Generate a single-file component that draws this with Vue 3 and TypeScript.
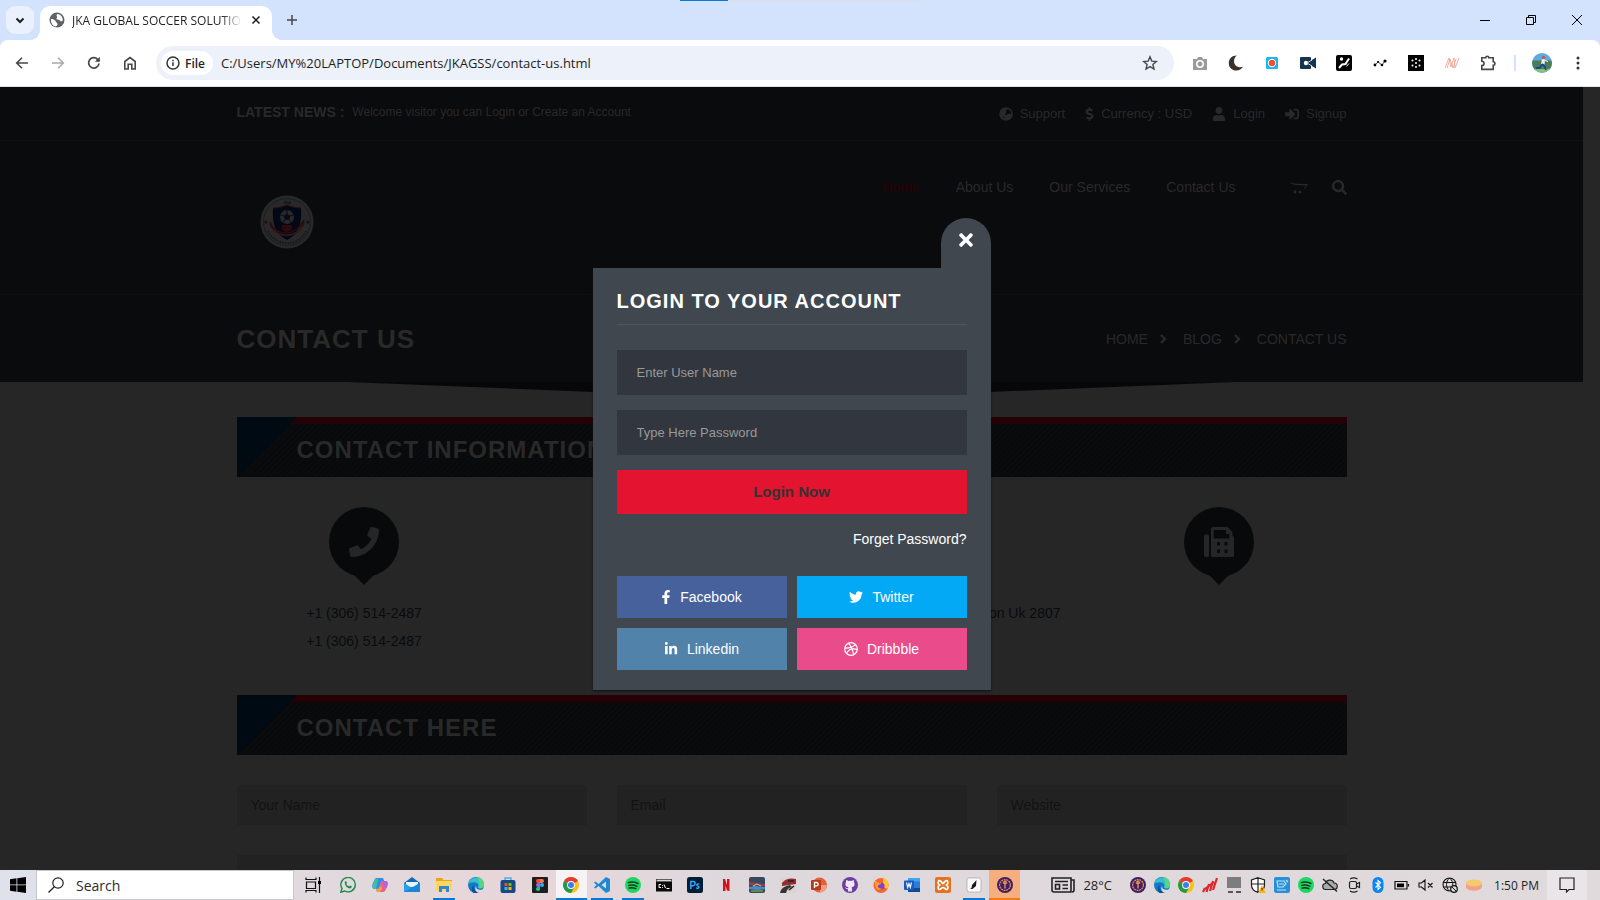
<script setup lang="ts">
import { ref } from 'vue'

interface Icon {
  box: string
  body: string
}

interface Item {
  icon: string
  label: string
  state?: string
}

const chromeRing =
  '<circle cx="8" cy="8" r="8" fill="#fbc116"/><path d="M8 8 1.1 4A8 8 0 0 1 14.9 4z" fill="#e33b2e"/><path d="M8 8 1.1 4A8 8 0 0 0 8 16l3.4-6z" fill="#229a4b"/><circle cx="8" cy="8" r="3.9" fill="#fff"/><circle cx="8" cy="8" r="3" fill="#3b7ded"/>'
const edgeSwirl =
  '<circle cx="8" cy="8" r="8" fill="#1678c8"/><path d="M.2 7A8 8 0 0 1 16 7.500c0 3-2.500 4.200-5 3.800-1.600-.2-1-1.200-.6-2C11 7 9 5.400 6.500 5.200 3.500 5 1.200 6 .2 7z" fill="#35c1c9"/><path d="M9 0.100C13 .3 16 3.500 16 7.500c0 3-2.500 4.200-5 3.800 1-4 .5-8-2-11.200z" fill="#5cd67a"/><path d="M6 8c-1.500 3 .5 7 6.500 6.600A8 8 0 0 1 5 15.400C3 13 3.500 9.500 6 8z" fill="#0b4f9e"/><path d="M8.200 9.200c-.4 2.300 1.500 4.200 6.200 3.400l1.600 1.200V16H11C7 15 6.500 11 8.200 9.200z" fill="#ded8dc"/>'
const spotifyDisc =
  '<circle cx="8" cy="8" r="8" fill="#1ed760"/><path d="M3.400 5.600c3.200-1 6.700-.7 9.500.9M3.800 8.400c2.700-.8 5.600-.5 8 .9M4.200 11c2.300-.6 4.600-.4 6.600.7" fill="none" stroke="#15351f" stroke-width="1.500" stroke-linecap="round"/>'
const purpleCoin =
  '<circle cx="8" cy="8" r="8" fill="#3e1f66"/><circle cx="8" cy="8" r="5.400" fill="none" stroke="#e98e4f" stroke-width="1.200" stroke-dasharray="2 .6"/><path d="M5.800 6h4.400M8 6v5.500M6.500 4.800 8 4l1.500.8" stroke="#f0a050" stroke-width="1.300" fill="none"/>'

const icons: Record<string, Icon> = {
  chevronDown: { box: '0 0 16 16', body: '<path d="M4.500 6.500 8 10l3.500-3.500" fill="none" stroke="#1f1f1f" stroke-width="2"/>' },
  globe: { box: '0 0 16 16', body: '<circle cx="8" cy="8" r="7.500" fill="#5f6368"/><path d="M2 7c2 0 3.500.5 4.500 2S8 11 8.500 12 7 14.500 6.500 14.500C4 14 2 11.500 2 8zM8.500 2c-1 1-1.500 1.500-.5 2.500s-1 1.500-.5 2.500 3 .5 3.500 1.500 1.500 1 2.500.5C14.500 5.500 12 2.500 8.500 2z" fill="#fff"/>' },
  cross: { box: '0 0 16 16', body: '<path d="m4 4 8 8m0-8-8 8" stroke="#1f1f1f" stroke-width="1.800"/>' },
  plus: { box: '0 0 16 16', body: '<path d="M8 3v10M3 8h10" stroke="#474747" stroke-width="1.500"/>' },
  minimize: { box: '0 0 12 12', body: '<path d="M1 6.500h10" stroke="#000"/>' },
  restore: { box: '0 0 12 12', body: '<path d="M1.500 3.500h7v7h-7zM3.500 3.500v-2h7v7h-2" fill="none" stroke="#000"/>' },
  close: { box: '0 0 12 12', body: '<path d="m1 1 10 10m0-10L1 11" stroke="#000"/>' },
  back: { box: '0 0 16 16', body: '<path d="M14 8H3m5-5.300L2.700 8 8 13.300" fill="none" stroke="#474747" stroke-width="1.600"/>' },
  forward: { box: '0 0 16 16', body: '<path d="M2 8h11M8 2.700 13.300 8 8 13.300" fill="none" stroke="#aaa" stroke-width="1.600"/>' },
  reload: { box: '0 0 16 16', body: '<path d="M13 8.500A5.200 5.200 0 1 1 11.600 4.300L13.200 6" fill="none" stroke="#474747" stroke-width="1.700"/><path d="M13.800 1.800v5h-5z" fill="#474747"/>' },
  home: { box: '0 0 16 16', body: '<path d="M2.800 14V6.500L8 2.500l5.200 4V14H9.800V9.300H6.200V14z" fill="none" stroke="#474747" stroke-width="1.600"/>' },
  info: { box: '0 0 16 16', body: '<circle cx="8" cy="8" r="6" fill="none" stroke="#333" stroke-width="1.500"/><path d="M8 7.300V11M8 4.700v1.500" stroke="#333" stroke-width="1.500"/>' },
  star: { box: '0 0 16 16', body: '<path d="m8 1.800 1.800 4.300 4.600.4-3.500 3 1.100 4.600L8 11.600l-4 2.500 1.100-4.600-3.500-3 4.600-.4z" fill="none" stroke="#474747" stroke-width="1.400"/>' },
  camera: { box: '0 0 16 16', body: '<path d="M1 4h4l1-2h4l1 2h4v11H1z" fill="#9b9b9b"/><circle cx="8" cy="9" r="3.200" fill="#9b9b9b" stroke="#fff" stroke-width="1.500"/>' },
  moon: { box: '0 0 16 16', body: '<path d="M9 .5C3.500.5.800 4 .800 8.200c0 4.300 3.400 7.300 7.400 7.300 3 0 5.500-1.300 6.800-3.700-5 1.700-9-1.300-9-5.800C6 3.800 7 1.800 9 .5z" fill="#383228"/>' },
  record: { box: '0 0 16 16', body: '<rect x="2" y="2" width="12" height="12" rx="1.500" fill="#12b8f5"/><circle cx="8" cy="8" r="4.200" fill="#fff"/><circle cx="8" cy="8" r="3.200" fill="#f4502a"/>' },
  video: { box: '0 0 16 16', body: '<path d="M1 2h9a1 1 0 0 1 1 1v2.500l5-3v11l-5-3V13a1 1 0 0 1-1 1H1a1 1 0 0 1-1-1V3a1 1 0 0 1 1-1z" fill="#16344e"/><circle cx="6" cy="8" r="2.200" fill="#fff"/><path d="m7 8 5-3M7 8l5 3" stroke="#cdd7df"/>' },
  slash: { box: '0 0 16 16', body: '<rect width="16" height="16" rx="2" fill="#000"/><path d="M3 13 6 9.500l3.500-.5L13 3.500" stroke="#fff" stroke-width="2" fill="none"/><circle cx="5.500" cy="4" r="1.700" fill="#fff"/><path d="m10.500 11.500 2.500-3" stroke="#fff"/>' },
  graph: { box: '0 0 16 16', body: '<path d="m3 10 3-3 4 3 3-4" stroke="#000" stroke-width=".7" fill="none"/><circle cx="3" cy="10" r="1.400"/><circle cx="6" cy="7" r="1.100"/><circle cx="10" cy="10" r="1.300"/><circle cx="13" cy="6" r="1.600"/>' },
  dots: { box: '0 0 16 16', body: '<path d="M0 0h16v16H0z"/><g fill="#fff"><circle cx="8" cy="4" r="1"/><circle cx="4.500" cy="5.500" r="1"/><circle cx="11.500" cy="5.500" r="1"/><circle cx="4.500" cy="10.500" r="1"/><circle cx="11.500" cy="10.500" r="1"/><circle cx="8" cy="12" r="1"/><circle cx="8" cy="8" r="1"/></g>' },
  scribble: { box: '0 0 16 16', body: '<path d="M1 13 5 3l2 9 3-9 1 10 4-10M3 13 6 4l3 9 3-9" fill="none" stroke="#f09c86" stroke-width=".8"/>' },
  puzzle: { box: '0 0 16 16', body: '<path d="M1.800 2.800h4a1.500 1.500 0 0 1 3 0h4.400v4a1.700 1.700 0 0 1 0 3.400v4.200H1.800v-3.800a2.200 2.200 0 0 0 0-4.400z" fill="none" stroke="#474747" stroke-width="1.600"/>' },
  avatar: { box: '0 0 20 20', body: '<circle cx="10" cy="10" r="10" fill="#62a9df"/><path d="M.6 7.500h18.800A10 10 0 0 1 18 16L2.500 16.500A10 10 0 0 1 .6 7.500z" fill="#4c7b55"/><path d="M2.500 16.300 18 15.700A10 10 0 0 1 2.500 16.300z" fill="#86c271"/><circle cx="11.500" cy="4.500" r="1.700" fill="#a36b4e"/><path d="m10 6 3 .5-.5 5H9z" fill="#eef2f8"/><path d="m10 11 2.500 2L14 17M10 11.500 7.500 15H4" stroke="#1746a0" stroke-width="1.800" fill="none"/><path d="m13 7.500 3 1" stroke="#eef2f8"/>' },
  menu: { box: '0 0 16 16', body: '<g fill="#333"><circle cx="8" cy="3" r="1.500"/><circle cx="8" cy="8" r="1.500"/><circle cx="8" cy="13" r="1.500"/></g>' },

  earth: { box: '0 0 16 16', body: '<circle cx="8" cy="8" r="7.800" fill="currentColor"/><path d="m8 3.500 3-1 2.500 2.500.5 3-2.500-.5L9 9 6.500 8.500 8 6.500zM4 11l2.500.5L6 13z" fill="#090b0d"/>' },
  dollar: { box: '0 0 288 512', body: '<path fill="currentColor" d="M209.200 233.400l-108-31.600C88.700 198.200 80 186.500 80 173.500c0-16.300 13.200-29.500 29.500-29.500h66.300c12.200 0 24.200 3.700 34.200 10.500 6.100 4.100 14.300 3.100 19.500-2l34.800-34c7.100-6.900 6.100-18.400-1.800-24.500C238 74.800 207.400 64.100 176 64V16c0-8.800-7.200-16-16-16h-32c-8.800 0-16 7.200-16 16v48h-2.500C45.800 64-5.400 118.700.5 183.600c4.200 46.100 39.400 83.600 83.800 96.600l102.500 30c12.500 3.700 21.200 15.300 21.200 28.300 0 16.300-13.200 29.500-29.500 29.500h-66.300C100 368 88 364.300 78 357.500c-6.100-4.100-14.300-3.100-19.500 2l-34.800 34c-7.100 6.900-6.100 18.400 1.800 24.500 24.500 19.200 55.100 29.900 86.500 30v48c0 8.800 7.200 16 16 16h32c8.800 0 16-7.200 16-16v-48.200c46.600-.9 90.300-28.600 105.700-72.700 21.500-61.600-14.600-124.800-72.500-141.700z"/>' },
  user: { box: '0 0 448 512', body: '<path fill="currentColor" d="M224 256c70.700 0 128-57.300 128-128S294.700 0 224 0 96 57.300 96 128s57.300 128 128 128zm89.600 32h-16.700c-22.200 10.200-46.900 16-72.900 16s-50.600-5.800-72.900-16h-16.700C60.200 288 0 348.200 0 422.400V464c0 26.500 21.500 48 48 48h352c26.500 0 48-21.500 48-48v-41.600c0-74.200-60.200-134.400-134.400-134.400z"/>' },
  signIn: { box: '0 0 512 512', body: '<path fill="currentColor" d="M416 448h-84c-6.600 0-12-5.400-12-12v-40c0-6.600 5.400-12 12-12h84c17.700 0 32-14.300 32-32V160c0-17.700-14.300-32-32-32h-84c-6.600 0-12-5.400-12-12V76c0-6.600 5.400-12 12-12h84c53 0 96 43 96 96v192c0 53-43 96-96 96zm-47-201L201 79c-15-15-41-4.500-41 17v96H24c-13.300 0-24 10.700-24 24v96c0 13.300 10.700 24 24 24h136v96c0 21.500 26 32 41 17l168-168c9.300-9.400 9.300-24.600 0-34z"/>' },
  cart: { box: '0 0 18 14', body: '<path d="M0 .5C1.500 4 4 3.500 7 3.700l11 .3c-1 2.500-3 3.500-4.500 6.500.5-3 1.500-4 2.500-5.300L7 5C3.500 4.900.800 4.500 0 .5z" fill="currentColor"/><circle cx="5" cy="12" r="1.400" fill="currentColor"/><circle cx="10" cy="12" r="1.400" fill="currentColor"/>' },
  search: { box: '0 0 512 512', body: '<path fill="currentColor" d="M505 442.700L405.300 343c-4.500-4.500-10.600-7-17-7H372c27.600-35.300 44-79.700 44-128C416 93.100 322.900 0 208 0S0 93.100 0 208s93.100 208 208 208c48.300 0 92.700-16.400 128-44v16.300c0 6.400 2.500 12.500 7 17l99.700 99.700c9.400 9.400 24.600 9.400 33.900 0l28.300-28.300c9.400-9.400 9.400-24.600.1-34zM208 336c-70.700 0-128-57.200-128-128 0-70.700 57.200-128 128-128 70.700 0 128 57.200 128 128 0 70.700-57.200 128-128 128z"/>' },
  angle: { box: '0 0 7 10', body: '<path d="m1 1 4 4-4 4" fill="none" stroke="currentColor" stroke-width="2.400"/>' },
  phone: { box: '0 0 512 512', body: '<path fill="currentColor" d="M493.400 24.600l-104-24c-11.300-2.600-22.900 3.300-27.500 13.900l-48 112c-4.200 9.800-1.400 21.300 6.900 28l60.600 49.600c-36 76.700-98.900 140.500-177.200 177.200l-49.600-60.600c-6.800-8.300-18.200-11.100-28-6.900l-112 48C3.900 366.500-2 378.100.6 389.400l24 104C27.100 504.200 36.700 512 48 512c256.100 0 464-207.500 464-464 0-11.200-7.700-20.900-18.600-23.400z"/>' },
  fax: { box: '0 0 30 30', body: '<path fill="currentColor" fill-rule="evenodd" d="M1.500 7.500h2A1.500 1.500 0 0 1 5 9v19.500A1.500 1.500 0 0 1 3.500 30h-2A1.500 1.500 0 0 1 0 28.500V9a1.500 1.500 0 0 1 1.500-1.500zM9 0h14.500L28.500 5v4A1.500 1.500 0 0 1 30 10.500v18a1.500 1.500 0 0 1-1.500 1.500h-20A1.500 1.500 0 0 1 7 28.500V2a2 2 0 0 1 2-2zm.8 3v8.500h15.700V7H22V3zM13 15v3.500h3V15zm7.500 0v3.500h3V15zM13 22.500V26h3v-3.500zm7.500 0V26h3v-3.500z"/>' },
  times: { box: '0 0 352 512', body: '<path fill="currentColor" d="M242.720 256l100.070-100.070c12.280-12.280 12.280-32.190 0-44.480l-22.240-22.240c-12.280-12.280-32.190-12.280-44.480 0L176 189.280 75.930 89.210c-12.280-12.280-32.190-12.280-44.480 0L9.210 111.450c-12.280 12.280-12.280 32.190 0 44.480L109.280 256 9.210 356.070c-12.280 12.280-12.280 32.190 0 44.480l22.240 22.240c12.280 12.280 32.200 12.280 44.480 0L176 322.720l100.070 100.070c12.280 12.280 32.200 12.280 44.480 0l22.240-22.240c12.280-12.280 12.280-32.190 0-44.480L242.720 256z"/>' },
  facebook: { box: '0 0 320 512', body: '<path fill="currentColor" d="M279.140 288l14.220-92.660h-88.910v-60.130c0-25.350 12.420-50.060 52.240-50.060h40.420V6.260S260.430 0 225.360 0c-73.220 0-121.080 44.380-121.080 124.720v70.620H22.890V288h81.390v224h100.170V288z"/>' },
  twitter: { box: '0 0 512 512', body: '<path fill="currentColor" d="M459.370 151.716c.325 4.548.325 9.097.325 13.645 0 138.720-105.583 298.558-298.558 298.558-59.452 0-114.680-17.219-161.137-47.106 8.447.974 16.568 1.299 25.340 1.299 49.055 0 94.213-16.568 130.274-44.832-46.132-.975-84.792-31.188-98.112-72.772 6.498.974 12.995 1.624 19.818 1.624 9.421 0 18.843-1.300 27.614-3.573-48.081-9.747-84.143-51.980-84.143-102.985v-1.299c13.969 7.797 30.214 12.670 47.431 13.319-28.264-18.843-46.781-51.005-46.781-87.391 0-19.492 5.197-37.360 14.294-52.954 51.655 63.675 129.300 105.258 216.365 109.807-1.624-7.797-2.599-15.918-2.599-24.040 0-57.828 46.782-104.934 104.934-104.934 30.213 0 57.502 12.670 76.670 33.137 23.715-4.548 46.456-13.320 66.599-25.340-7.798 24.366-24.366 44.833-46.132 57.827 21.117-2.273 41.584-8.122 60.426-16.243-14.292 20.791-32.161 39.308-52.628 54.253z"/>' },
  linkedin: { box: '0 0 448 512', body: '<path fill="currentColor" d="M100.280 448H7.400V148.900h92.880zM53.790 108.100C24.090 108.100 0 83.500 0 53.800a53.790 53.790 0 0 1 107.580 0c0 29.700-24.100 54.300-53.790 54.300zM447.900 448h-92.680V302.400c0-34.700-.7-79.200-48.290-79.200-48.290 0-55.690 37.700-55.690 76.700V448h-92.780V148.900h89.080v40.800h1.300c12.400-23.500 42.690-48.300 87.880-48.300 94 0 111.280 61.900 111.280 142.300V448z"/>' },
  dribbble: { box: '0 0 16 16', body: '<g fill="none" stroke="currentColor" stroke-width="1.400"><circle cx="8" cy="8" r="7.200"/><path d="M5.300 1.500C8 4.500 10 8.500 11 14.500M1 7c5 .2 9-.8 12-4M3 13c2-4.500 7-5.800 12-4.500"/></g>' },

  windows: { box: '0 0 16 16', body: '<path d="M0 2.200 6.500 1.300v6.200H0zM7.300 1.200 16 0v7.500H7.300zM0 8.300h6.500v6.400L0 13.800zM7.300 8.300H16V16l-8.700-1.200z"/>' },
  lens: { box: '0 0 16 16', body: '<circle cx="10" cy="6" r="5.200" fill="none" stroke="#222" stroke-width="1.200"/><path d="M6.300 9.700.5 15.500" stroke="#222" stroke-width="1.300"/>' },
  taskView: { box: '0 0 16 16', body: '<path d="M1 .500v2h10v-2M1 15.500v-2h10v2M1.500 5h9v6.500h-9zM14.500 0v16" fill="none" stroke="#111" stroke-width="1.200"/><path d="M13 4h3v3h-3z"/>' },
  whatsapp: { box: '0 0 16 16', body: '<path d="M.8 15.200 2 11.500A7.200 7.200 0 1 1 4.700 14z" fill="none" stroke="#1d8a4e" stroke-width="1.400"/><path d="M5 4.500c1-.9 1.500 0 2 1.300L6.300 7C7 8.400 8 9 9.200 9.500l1-.9c1.400.6 2 1 1.300 2-2.500 3-8-3-6.500-6.100z" fill="#1d8a4e"/>' },
  copilot: { box: '0 0 16 16', body: '<path d="M4.500 1H11l2 5-4 .5L7 12H2C-.5 11 0 7.500 1.500 5 2.500 3 3 1 4.500 1z" fill="#2f8fe8"/><path d="M1 8c0-2 1.500-4 2-6l3 0-2 10H2C1 11 .8 9.500 1 8z" fill="#36c3a0"/><path d="M9 4h5c2.500 1 2 4 .5 7-1 2.500-2 4-3.500 4H5l-1-3 3.500-.5z" fill="#e8608c"/><path d="M10.500 4H14c2.500 1 2 4 .5 7L12 9z" fill="#b163e0"/><path d="m4 12 3.500-.5L9 8l1 4-2 3H6c-1 0-1.600-1.500-2-3z" fill="#f7a13b"/>' },
  mail: { box: '0 0 16 16', body: '<path d="M0 6 8 0l8 6v9H0z" fill="#1468b3"/><path d="M2 5h12v5H2z" fill="#e6f2fc"/><path d="m0 6 8 5 8-5v9H0z" fill="#2a9de8"/><path d="M0 15 16 6v9z" fill="#1b86d8"/>' },
  explorer: { box: '0 0 16 16', body: '<path d="M0 1h6l1.500 2H16v11H0z" fill="#e8a520"/><path d="M0 4h16v10H0z" fill="#fdd663"/><path d="M3 9h10v6h-3v-3H6v3H3z" fill="#3287d2"/>' },
  edge: { box: '0 0 16 16', body: edgeSwirl },
  store: { box: '0 0 16 16', body: '<path d="M5 4V1h6v3" fill="none" stroke="#45b3ef" stroke-width="1.500"/><rect x=".5" y="3" width="15" height="13" rx="2" fill="#154a86"/><path d="M4.500 6h3v3h-3z" fill="#f25022"/><path d="M8.500 6h3v3h-3z" fill="#7fba00"/><path d="M4.500 10h3v3h-3z" fill="#38b6f5"/><path d="M8.500 10h3v3h-3z" fill="#ffb900"/>' },
  figma: { box: '0 0 16 16', body: '<rect width="16" height="16" rx="1" fill="#1e1e1e"/><path d="M8 2H6a2 2 0 0 0 0 4h2z" fill="#f24e1e"/><path d="M8 2h2a2 2 0 0 1 0 4H8z" fill="#ff7262"/><path d="M8 6H6a2 2 0 0 0 0 4h2z" fill="#a259ff"/><circle cx="10" cy="8" r="2" fill="#1abcfe"/><path d="M8 10H6a2 2 0 1 0 2 2z" fill="#0acf83"/>' },
  chrome: { box: '0 0 16 16', body: chromeRing },
  vscode: { box: '0 0 16 16', body: '<path d="m12 0 4 2v12l-4 2L4.500 9 1.500 11.500 0 10.500 2.500 8 0 5.500l1.500-1L4.500 7zm0 4.500L7.500 8l4.500 3.500z" fill="#1f8ad2"/>' },
  spotify: { box: '0 0 16 16', body: spotifyDisc },
  terminal: { box: '0 0 16 16', body: '<path d="M0 2h16v12.500H0z" fill="#0a0a0a"/><path d="M.5 2.500h15v2H.5z" fill="#d5d9dd" stroke="#555" stroke-width=".6"/><path d="M5 7.500H3v3h2M6.500 8v.8M6.500 10v.8M8 7.500l1.500 3.500M10.500 11.500h3" stroke="#fff" fill="none"/>' },
  photoshop: { box: '0 0 16 16', body: '<rect width="16" height="16" rx="2.500" fill="#001e36"/><path d="M3.800 12V4.500H6a2 2 0 0 1 0 4.200H3.800M12.300 7.200c-2.500-1-3.400.8-1.700 1.600 2.300.9 1.400 3.100-1.500 2.100" fill="none" stroke="#31a8ff" stroke-width="1.400"/>' },
  netflix: { box: '0 0 16 16', body: '<path d="M5 2h2l2 6V2h2.500v12L9 13.500l-1.500-5V14L5 14z" fill="#d3101b"/>' },
  stadium: { box: '0 0 16 16', body: '<rect width="16" height="16" rx="2" fill="#37495e"/><path d="m0 5 16 2v2L0 8z" fill="#a03c40"/><path d="m0 10 6-1 10 1v2l-8 1-8-1z" fill="#4a8bc4"/><path d="M2 13h12v2H2z" fill="#5b8c4c"/><path d="m4 9 4-2 4 2" stroke="#b8c6d4" fill="none"/>' },
  game: { box: '0 0 16 16', body: '<path d="M0 1h16v15H0z" fill="#d9d4d2"/><path d="M2 6c4-5 9-5 14-4v5L9 8 2 9z" fill="#942d30"/><path d="M0 16c1-5 5-7 10-8l2 2c-4 1-5 3-6 6z" fill="#363636"/><path d="M8 4h6M9 13l5-4" stroke="#222" stroke-width="1.500"/>' },
  powerpoint: { box: '0 0 16 16', body: '<circle cx="8.500" cy="8" r="7.500" fill="#e0603c"/><path d="M9 8h7a7.500 7.500 0 0 1-7 7.500z" fill="#f29b7d"/><rect y="3" width="10" height="10" rx="1" fill="#b93a1d"/><path d="M3.500 11V5.500h2a1.600 1.600 0 0 1 0 3.300h-2" fill="none" stroke="#fff" stroke-width="1.300"/>' },
  github: { box: '0 0 16 16', body: '<circle cx="8" cy="8" r="8" fill="#6b3fa0"/><path d="M6 14.500v-2.300c-2 .3-2.300-1.200-3-1.700 1-.2 1.500 1 3 .7 0-.5.2-.8.5-1C4 10 3.200 8.500 3.500 6.500c0-.6.3-1 .6-1.400-.2-.7-.1-1.400.1-2 .8 0 1.400.4 2 .9 1.200-.3 2.400-.3 3.600 0 .6-.5 1.200-.9 2-.9.2.6.3 1.300.1 2 .3.4.6.8.6 1.400.3 2-.5 3.500-3 3.700.4.400.5.800.5 1.500v2.800z" fill="#efe7f7"/>' },
  firefox: { box: '0 0 16 16', body: '<circle cx="8" cy="8.500" r="7.500" fill="#f8642a"/><path d="M10 0c5 2.500 7 7 4.500 11.500C12 12 9 9 10 5z" fill="#ffc531"/><circle cx="8" cy="9" r="3.600" fill="#7c45c9"/><path d="M2 3.500 6 6l2-.5C9 7 6 7.500 5 8.500S6 12 9 11.500c-3 3-7 0-7-3z" fill="#ff9a2e"/>' },
  word: { box: '0 0 16 16', body: '<path d="M4 1h12v14H4z" fill="#2b7cd3"/><path d="M4 1h12v3.500H4z" fill="#41a5ee"/><path d="M4 11h12v4H4z" fill="#144a91"/><rect y="3.500" width="10" height="9.500" rx="1" fill="#185abd"/><path d="m2.500 5.500 1.200 5L5 6.500l1.300 4 1.200-5" fill="none" stroke="#fff" stroke-width="1.100"/>' },
  xampp: { box: '0 0 16 16', body: '<rect width="16" height="16" rx="2" fill="#e8711f"/><path d="M4 3.500c3 0 2 2 4 3 2-1 1-3 4-3 1.500 2 1 3.500-.5 4.500 1.500 1 2 3 .5 4.500-3 0-2-2-4-2s-1 2-4 2C2.500 11 3 9 4.500 8 3 7 2.500 5.500 4 3.500z" fill="none" stroke="#fff" stroke-width="1.700"/>' },
  feather: { box: '0 0 16 16', body: '<rect x="1" y="1" width="14" height="14" rx="2" fill="#fafafa" stroke="#999" stroke-width=".6"/><path d="m10.500 3-.5 6-3.500 3H4l1.500-1L6 8z" fill="#1b1b1b"/>' },
  coin: { box: '0 0 16 16', body: purpleCoin },
  news: { box: '0 0 24 16', body: '<path d="M1 1h19v14H3a2 2 0 0 1-2-2zM20 3h3v10a2 2 0 0 1-2 2M4 4.500h13M11.500 8H17M11.500 11.500H17M4.500 7.500h4V12h-4z" fill="none" stroke="#222" stroke-width="1.600"/>' },
  bars: { box: '0 0 16 16', body: '<path d="m1 15 2-4M4.500 15l2.500-8M8 14l3-10M11 13l4-12M3 12l9-7" stroke="#e0262d" stroke-width="2.200"/>' },
  monitor: { box: '0 0 16 16', body: '<path d="M1 0h14v11H1z" fill="#7d7d7d"/><path d="M2 14h5v2H2zM10 14h5v2h-5z" fill="#555"/>' },
  shield: { box: '0 0 16 16', body: '<path d="M8 .7 14.500 3v5c0 4-3 6.300-6.500 7.300C4.500 14.300 1.500 12 1.500 8V3zM8 1v14M2 7h12" fill="#fff" stroke="#222" stroke-width="1.200"/><path d="m12 8 4 8H8z" fill="#f9b612"/><path d="M12 11v2.500" stroke="#222"/>' },
  blueTool: { box: '0 0 16 16', body: '<rect width="16" height="16" rx="2" fill="#2b8fd6"/><path d="M3 4h7l2 3-3 3H4zM5 7h5M3 13h9M12 3l2 2" fill="none" stroke="#b9e2fb" stroke-width="1.200"/>' },
  cloudOff: { box: '0 0 16 16', body: '<path d="M4 12.500a3 3 0 0 1-.5-6A4.500 4.500 0 0 1 12 6a3.200 3.200 0 0 1 0 6.500z" fill="#aaa" stroke="#222" stroke-width="1.200"/><path d="m1 2 14 12.500" stroke="#222" stroke-width="1.400"/>' },
  meet: { box: '0 0 16 16', body: '<rect x="3.500" y="4.500" width="7" height="7" rx="1.500" fill="none" stroke="#222" stroke-width="1.200"/><path d="m10.500 7 3-1.500v5l-3-1.500M4 2c2.500-1.500 5-1.500 7.500 0M4 14c2.500 1.500 5 1.500 7.500 0" fill="none" stroke="#222" stroke-width="1.200"/>' },
  bluetooth: { box: '0 0 16 16', body: '<rect x="2.500" width="11" height="16" rx="5.500" fill="#0a84f0"/><path d="m5.500 5.300 5 5L8 12.500v-9l2.500 2.300-5 4.700" fill="none" stroke="#fff" stroke-width="1.100"/>' },
  battery: { box: '0 0 16 16', body: '<path d="M1 4.500h12v7.500H1zM14.500 7v2.500" fill="none" stroke="#111" stroke-width="1.200"/><path d="M3 6.500h7v3.700H3z"/>' },
  mute: { box: '0 0 16 16', body: '<path d="M1 6h2.500L7 3v10l-3.500-3H1zM10 6l4.500 4.500m0-4.500L10 10.500" fill="none" stroke="#111" stroke-width="1.100"/>' },
  network: { box: '0 0 16 16', body: '<circle cx="7.500" cy="7.500" r="6.500" fill="none" stroke="#111" stroke-width="1.100"/><path d="M1 5.500h13M1 10h8M7.500 1c-4 3.500-4 9.500 0 13M7.500 1c3 2.500 3.500 5 3.200 7" fill="none" stroke="#111"/><circle cx="12" cy="12" r="3.300" fill="#ddd8da" stroke="#111" stroke-width="1.200"/><path d="m10 10 4 4" stroke="#111"/>' },
  disk: { box: '0 0 16 16', body: '<path d="M0 6v4c1 5 14 5 16 0V6z" fill="#f2a08c"/><ellipse cx="8" cy="6" rx="8" ry="3.500" fill="#f5c96d"/>' },
  notice: { box: '0 0 16 16', body: '<path d="M1 1h14v11.500H10L7.500 15v-2.500H1z" fill="none" stroke="#222" stroke-width="1.200"/>' },
}

const extensions: Item[] = [
  { icon: 'camera', label: 'Screenshot' },
  { icon: 'moon', label: 'Dark mode' },
  { icon: 'record', label: 'Recorder' },
  { icon: 'video', label: 'Video' },
  { icon: 'slash', label: 'Exposure' },
  { icon: 'graph', label: 'Graph' },
  { icon: 'dots', label: 'Grid' },
  { icon: 'scribble', label: 'Waves' },
  { icon: 'puzzle', label: 'Extensions' },
]

const account: Item[] = [
  { icon: 'earth', label: 'Support' },
  { icon: 'dollar', label: 'Currency : USD' },
  { icon: 'user', label: 'Login' },
  { icon: 'signIn', label: 'Signup' },
]

const nav = ['Home', 'About Us', 'Our Services', 'Contact Us']

const socials: Item[] = [
  { icon: 'facebook', label: 'Facebook' },
  { icon: 'twitter', label: 'Twitter' },
  { icon: 'linkedin', label: 'Linkedin' },
  { icon: 'dribbble', label: 'Dribbble' },
]

const pinned: Item[] = [
  { icon: 'whatsapp', label: 'WhatsApp' },
  { icon: 'copilot', label: 'Copilot' },
  { icon: 'mail', label: 'Mail' },
  { icon: 'explorer', label: 'File Explorer', state: 'running' },
  { icon: 'edge', label: 'Edge' },
  { icon: 'store', label: 'Store' },
  { icon: 'figma', label: 'Figma' },
  { icon: 'chrome', label: 'Chrome', state: 'active' },
  { icon: 'vscode', label: 'Visual Studio Code', state: 'running' },
  { icon: 'spotify', label: 'Spotify', state: 'running' },
  { icon: 'terminal', label: 'Command Prompt' },
  { icon: 'photoshop', label: 'Photoshop' },
  { icon: 'netflix', label: 'Netflix' },
  { icon: 'stadium', label: 'Football' },
  { icon: 'game', label: 'Racing' },
  { icon: 'powerpoint', label: 'PowerPoint' },
  { icon: 'github', label: 'GitHub Desktop' },
  { icon: 'firefox', label: 'Firefox' },
  { icon: 'word', label: 'Word' },
  { icon: 'xampp', label: 'XAMPP' },
  { icon: 'feather', label: 'Notes', state: 'running' },
  { icon: 'coin', label: 'Wallet', state: 'alert' },
]

const tray = ['coin', 'edge', 'chrome', 'bars', 'monitor', 'shield', 'blueTool', 'spotify', 'cloudOff', 'meet', 'bluetooth', 'battery', 'mute', 'network', 'disk']

const url = ref('C:/Users/MY%20LAPTOP/Documents/JKAGSS/contact-us.html')
const userName = ref('')
const password = ref('')
const loginOpen = ref(true)
</script>

<template>
  <div class="screen">
    <header class="tabs">
      <div class="loading"></div>
      <button class="tab-list" aria-label="Search tabs"><svg class="i16" :viewBox="icons.chevronDown.box" v-html="icons.chevronDown.body"></svg></button>
      <div class="tab">
        <svg class="i16" :viewBox="icons.globe.box" v-html="icons.globe.body"></svg>
        <span class="tab-title">JKA GLOBAL SOCCER SOLUTION</span>
        <button aria-label="Close tab"><svg class="i14" :viewBox="icons.cross.box" v-html="icons.cross.body"></svg></button>
      </div>
      <button class="new-tab" aria-label="New tab"><svg class="i16" :viewBox="icons.plus.box" v-html="icons.plus.body"></svg></button>
      <div class="controls">
        <button v-for="c in ['minimize', 'restore', 'close']" :key="c" :aria-label="c"><svg class="i12" :viewBox="icons[c].box" v-html="icons[c].body"></svg></button>
      </div>
    </header>

    <div class="toolbar-bg">
      <div class="toolbar">
        <button v-for="b in ['back', 'forward', 'reload', 'home']" :key="b" class="tool" :aria-label="b"><svg class="i16" :viewBox="icons[b].box" v-html="icons[b].body"></svg></button>
        <div class="omnibox">
          <button class="chip"><svg class="i16" :viewBox="icons.info.box" v-html="icons.info.body"></svg>File</button>
          <input v-model="url" aria-label="Address" />
          <button class="star" aria-label="Bookmark"><svg class="i16" :viewBox="icons.star.box" v-html="icons.star.body"></svg></button>
        </div>
        <button v-for="e in extensions" :key="e.icon" class="tool" :aria-label="e.label"><svg class="i16" :viewBox="icons[e.icon].box" v-html="icons[e.icon].body"></svg></button>
        <span class="divider"></span>
        <button class="tool" aria-label="Profile"><svg class="i20" :viewBox="icons.avatar.box" v-html="icons.avatar.body"></svg></button>
        <button class="tool" aria-label="Menu"><svg class="i16" :viewBox="icons.menu.box" v-html="icons.menu.body"></svg></button>
      </div>
    </div>

    <main class="viewport">
      <div class="site">
        <div class="masthead">
          <div class="topbar">
            <div class="wrap">
              <p class="news"><strong>LATEST NEWS :</strong><span>Welcome visitor you can Login or Create an Account</span></p>
              <ul class="account">
                <li v-for="a in account" :key="a.label"><a href="#"><svg :class="a.icon" :viewBox="icons[a.icon].box" v-html="icons[a.icon].body"></svg>{{ a.label }}</a></li>
              </ul>
            </div>
          </div>
          <div class="brandbar">
            <div class="wrap">
              <a class="logo" href="#" aria-label="JKA Global Soccer Solutions">
                <svg viewBox="0 0 54 54">
                  <circle cx="27" cy="27" r="26.500" fill="#292929" />
                  <circle cx="27" cy="27" r="23.500" fill="none" stroke="#15171b" stroke-width=".7" />
                  <path d="M13 13c5 0 10-1 14-3 4 2 9 3 14 3 1 16-2 26-14 32C15 39 12 29 13 13z" fill="#030816" />
                  <path d="M13 13c5 0 10-1 14-3 4 2 9 3 14 3" fill="none" stroke="#2c0a0c" />
                  <path d="M10 27c5 14 25 16 34-2M10 29c6 16 28 16 34-2" fill="none" stroke="#2e0a0c" stroke-width="1.500" />
                  <path d="M11 33c8 10 24 9 31-1" fill="none" stroke="#292929" />
                  <path d="M22 30h10v5l-5 2-5-2z" fill="#2c0a0c" />
                  <circle cx="27" cy="22" r="7" fill="#292929" />
                  <path d="m27 18.500 3.300 2.400-1.200 3.900h-4.200l-1.200-3.900z" fill="#070b16" />
                  <path d="M27 15v3.500m3.300 2.400 3.500-1m-4.700 5 2 3m-6.200-3-2 3m.8-7-3.500-1" fill="none" stroke="#070b16" />
                  <circle cx="6" cy="27" r="1.500" fill="#101216" /><circle cx="48" cy="27" r="1.500" fill="#101216" />
                  <path d="M8 36c7 16 31 16 38 0" fill="none" stroke="#15171b" stroke-width="2" stroke-dasharray="1.500 1.200" />
                  <text x="27" y="8.500">JKA</text>
                </svg>
              </a>
              <nav>
                <a v-for="(n, i) in nav" :key="n" href="#" :class="{ current: i === 0 }">{{ n }}</a>
                <button class="cart" aria-label="Cart"><svg :viewBox="icons.cart.box" v-html="icons.cart.body"></svg></button>
                <button class="find" aria-label="Search"><svg :viewBox="icons.search.box" v-html="icons.search.body"></svg></button>
              </nav>
            </div>
          </div>
          <div class="banner">
            <div class="wrap">
              <h1>CONTACT US</h1>
              <div class="crumbs">
                <a href="#">HOME</a><svg :viewBox="icons.angle.box" v-html="icons.angle.body"></svg>
                <a href="#">BLOG</a><svg :viewBox="icons.angle.box" v-html="icons.angle.body"></svg>
                <span>CONTACT US</span>
              </div>
            </div>
          </div>
        </div>
        <div class="wedge"></div>

        <section class="wrap-col">
          <h2>CONTACT INFORMATION</h2>
          <div class="info">
            <div class="card">
              <span class="pin"><svg :viewBox="icons.phone.box" v-html="icons.phone.body"></svg></span>
              <p>+1 (306) 514-2487<br />+1 (306) 514-2487</p>
            </div>
            <div class="card"></div>
            <div class="card address"><p>London Uk 2807</p></div>
            <div class="card">
              <span class="pin"><svg :viewBox="icons.fax.box" v-html="icons.fax.body"></svg></span>
            </div>
          </div>
          <h2>CONTACT HERE</h2>
          <form class="contact" @submit.prevent>
            <input placeholder="Your Name" aria-label="Your Name" />
            <input placeholder="Email" aria-label="Email" />
            <input placeholder="Website" aria-label="Website" />
            <textarea aria-label="Message"></textarea>
          </form>
        </section>
      </div>

      <div v-if="loginOpen" class="overlay">
        <div class="modal" role="dialog" aria-label="Login to your account">
          <button class="dismiss" aria-label="Close" @click="loginOpen = false"><svg :viewBox="icons.times.box" v-html="icons.times.body"></svg></button>
          <h3>LOGIN TO YOUR ACCOUNT</h3>
          <form @submit.prevent>
            <input v-model="userName" placeholder="Enter User Name" aria-label="User name" />
            <input v-model="password" type="password" placeholder="Type Here Password" aria-label="Password" />
            <button class="submit">Login Now</button>
          </form>
          <a class="forgot" href="#">Forget Password?</a>
          <div class="socials">
            <a v-for="s in socials" :key="s.label" href="#" :class="s.icon"><svg :viewBox="icons[s.icon].box" v-html="icons[s.icon].body"></svg>{{ s.label }}</a>
          </div>
        </div>
      </div>
    </main>

    <footer class="taskbar">
      <button class="start" aria-label="Start"><svg class="i16" :viewBox="icons.windows.box" v-html="icons.windows.body"></svg></button>
      <label class="search"><svg class="i16" :viewBox="icons.lens.box" v-html="icons.lens.body"></svg><input placeholder="Search" aria-label="Search" /></label>
      <button class="view" aria-label="Task view"><svg class="i16" :viewBox="icons.taskView.box" v-html="icons.taskView.body"></svg></button>
      <div class="pinned">
        <button v-for="p in pinned" :key="p.label" :class="p.state" :aria-label="p.label"><svg class="i16" :viewBox="icons[p.icon].box" v-html="icons[p.icon].body"></svg></button>
      </div>
      <div class="status">
        <button class="weather"><svg :viewBox="icons.news.box" v-html="icons.news.body"></svg>28°C</button>
        <div class="tray">
          <span v-for="t in tray" :key="t"><svg class="i16" :viewBox="icons[t].box" v-html="icons[t].body"></svg></span>
        </div>
        <time>1:50 PM</time>
        <button class="notice" aria-label="Notifications"><svg class="i16" :viewBox="icons.notice.box" v-html="icons.notice.body"></svg></button>
      </div>
    </footer>
  </div>
</template>

<style>
body {
  margin: 0;
}
</style>

<style scoped>
* {
  box-sizing: border-box;
}
.screen {
  display: flex;
  flex-direction: column;
  height: 100vh;
  overflow: hidden;
  font-family: "Segoe UI", "Open Sans", "Noto Sans", sans-serif;
  color: #1f1f1f;
}
button {
  display: flex;
  align-items: center;
  justify-content: center;
  padding: 0;
  border: 0;
  background: none;
  font: inherit;
  color: inherit;
}
input,
textarea {
  border: 0;
  outline: 0;
  border-radius: 0;
  font: inherit;
  min-width: 0;
}
a {
  color: inherit;
  text-decoration: none;
}
h1,
h2,
h3,
p,
ul {
  margin: 0;
  padding: 0;
  list-style: none;
}
svg {
  display: block;
  flex: none;
}
.i12 { width: 12px; height: 12px; }
.i14 { width: 14px; height: 14px; }
.i16 { width: 16px; height: 16px; }
.i20 { width: 20px; height: 20px; }

.tabs {
  position: relative;
  display: flex;
  flex: none;
  height: 40px;
  padding: 6px 0 0 6px;
  background: #d3e3fd;
}
.loading {
  position: absolute;
  top: 0;
  left: 50%;
  width: 242px;
  height: 1px;
  margin-left: -120px;
  background: linear-gradient(90deg, #0a78d4 48px, #dcdfe6 48px);
}
.tab-list {
  width: 28px;
  height: 28px;
  border-radius: 9px;
  background: #eaf1fd;
}
.tab {
  position: relative;
  display: flex;
  align-items: center;
  gap: 7px;
  width: 232px;
  margin-left: 6px;
  padding: 0 9px 6px;
  border-radius: 10px 10px 0 0;
  background: #fff;
}
.tab::before,
.tab::after {
  content: "";
  position: absolute;
  bottom: 0;
  width: 10px;
  height: 10px;
}
.tab::before {
  right: 100%;
  background: radial-gradient(circle at 0 0, transparent 10px, #fff 10px);
}
.tab::after {
  left: 100%;
  background: radial-gradient(circle at 100% 0, transparent 10px, #fff 10px);
}
.tab-title {
  flex: 1;
  min-width: 0;
  white-space: nowrap;
  font-size: 12px;
  mask-image: linear-gradient(90deg, #000 88%, transparent);
}
.new-tab {
  width: 28px;
  height: 28px;
  margin-left: 6px;
}
.controls {
  display: flex;
  margin: -6px 0 0 auto;
}
.controls button {
  width: 46px;
}
.toolbar-bg {
  flex: none;
  background: #d3e3fd;
}
.toolbar {
  display: flex;
  align-items: center;
  height: 47px;
  padding: 0 4px;
  border-bottom: 1px solid #dfe3ea;
  border-radius: 8px 8px 0 0;
  background: #fff;
}
.tool {
  flex: none;
  width: 36px;
  height: 34px;
}
.omnibox {
  display: flex;
  flex: 1;
  align-items: center;
  height: 34px;
  margin: 0 8px 0 8px;
  padding: 0 16px 0 5px;
  border-radius: 17px;
  background: #ecf1fa;
}
.chip {
  gap: 4px;
  height: 24px;
  padding: 0 8px 0 4px;
  border-radius: 12px;
  background: #fff;
  font-size: 12px;
  font-weight: 600;
}
.omnibox input {
  flex: 1;
  margin-left: 8px;
  padding: 0;
  background: none;
  font-size: 13px;
  color: #1f1f1f;
}
.divider {
  width: 2px;
  height: 16px;
  margin: 0 8px;
  background: #d3e3fd;
}

.viewport {
  position: relative;
  flex: 1;
  min-height: 0;
  overflow: hidden;
  background: #262626;
  font-family: Arial, "Liberation Sans", sans-serif;
}
.site {
  margin-right: 17px;
  color: #292929;
}
.masthead {
  background: #090b0d;
}
.wrap {
  display: flex;
  justify-content: space-between;
  width: 1110px;
  max-width: 94%;
  margin: 0 auto;
}
.wrap-col {
  width: 1110px;
  max-width: 94%;
  margin: 0 auto;
  padding-top: 15px;
}
.topbar {
  height: 54px;
  border-bottom: 1px solid #0d0f11;
}
.news {
  display: flex;
  gap: 8px;
  line-height: 50px;
  font-size: 12px;
}
.news strong {
  font-size: 14px;
}
.account {
  display: flex;
  gap: 20px;
  padding-top: 17px;
  font-size: 13px;
  line-height: 20px;
}
.account a {
  display: flex;
  align-items: center;
  gap: 7px;
}
.account svg {
  width: 14px;
  height: 14px;
}
.account .dollar {
  width: 9px;
}
.brandbar {
  height: 154px;
  border-bottom: 1px solid #0d0f11;
}
.logo {
  padding: 54px 0 0 23px;
}
.logo svg {
  width: 54px;
  height: 54px;
}
.logo text {
  font: bold 4px "Liberation Sans", sans-serif;
  text-anchor: middle;
  fill: #0d0f14;
}
nav {
  display: flex;
  align-items: center;
  gap: 36px;
  height: 20px;
  margin-top: 36px;
  font-size: 14px;
}
.current {
  color: #290204;
}
.cart svg {
  width: 18px;
  height: 14px;
}
.cart {
  margin: 0 -12px 0 18px;
}
.find svg {
  width: 15px;
  height: 15px;
}
.banner .wrap {
  align-items: center;
  height: 87px;
}
h1 {
  padding-top: 2px;
  font-size: 26px;
  letter-spacing: 1px;
}
.crumbs {
  display: flex;
  align-items: center;
  gap: 12px;
  font-size: 14px;
}
.crumbs svg {
  width: 7px;
  height: 10px;
  margin-right: 4px;
}
.wedge {
  height: 20px;
  background: #070709;
  clip-path: polygon(22% 0, 78% 0, 50% 90%);
}
h2 {
  height: 60px;
  padding-left: 60px;
  line-height: 65px;
  font-size: 24px;
  letter-spacing: 1px;
  background:
    linear-gradient(135deg, #000a12 42px, transparent 43px) 0 0 / 60px 60px no-repeat,
    linear-gradient(#250007, #250007) 0 0 / 100% 7px no-repeat,
    repeating-linear-gradient(135deg, #090b0d 0 2px, #07090b 2px 4px);
}
.info {
  display: grid;
  grid-template-columns: repeat(4, 1fr);
  gap: 30px;
  padding: 30px 0 40px;
  color: #090b0d;
}
.card {
  height: 148px;
  font-size: 14px;
  line-height: 28px;
  text-align: center;
}
.card p {
  margin-top: 22px;
}
.address p {
  padding: 70px 1px 0 0;
  text-align: right;
}
.pin {
  position: relative;
  display: grid;
  place-items: center;
  width: 70px;
  height: 70px;
  margin: 0 auto;
  border-radius: 50%;
  background: #07090b;
  color: #262626;
}
.pin::after {
  content: "";
  position: absolute;
  top: 67px;
  width: 22px;
  height: 11px;
  background: #07090b;
  clip-path: polygon(0 0, 100% 0, 50% 100%);
}
.pin svg {
  width: 30px;
  height: 30px;
}
.contact {
  display: grid;
  grid-template-columns: repeat(3, 1fr);
  gap: 30px;
  padding-top: 30px;
  font-size: 14px;
}
.contact input,
.contact textarea {
  height: 40px;
  padding: 0 14px;
  background: #222;
  color: #111;
}
.contact textarea {
  grid-column: 1 / -1;
  resize: none;
}
.contact ::placeholder {
  color: #121212;
  opacity: 1;
}

.overlay {
  position: absolute;
  inset: 0 17px 0 0;
  display: grid;
  place-items: center;
}
.modal {
  position: relative;
  width: 398px;
  padding: 18px 24px 20px;
  background: #40474e;
  box-shadow: 0 1px 2px #111;
  color: #fff;
}
.dismiss {
  position: absolute;
  right: 0;
  bottom: 100%;
  width: 50px;
  height: 50px;
  padding-bottom: 6px;
  border-radius: 25px 25px 0 0;
  background: #40474e;
}
.dismiss svg {
  width: 14px;
  height: 20px;
}
h3 {
  padding-bottom: 8px;
  border-bottom: 1px solid #50565d;
  font-size: 20px;
  line-height: 30px;
  letter-spacing: 1px;
}
.modal form {
  display: grid;
  gap: 15px;
  padding-top: 25px;
}
.modal input {
  height: 45px;
  padding: 0 20px;
  background: #32363e;
  color: #fff;
  font-size: 13px;
}
.modal ::placeholder {
  color: #999;
  opacity: 1;
}
.submit {
  height: 44px;
  background: #e4132f;
  color: #333;
  font-size: 15px;
  font-weight: 700;
}
.forgot {
  display: block;
  padding: 15px 0 27px;
  font-size: 14px;
  line-height: 20px;
  text-align: right;
}
.socials {
  display: grid;
  grid-template-columns: 1fr 1fr;
  gap: 10px;
  font-size: 14px;
}
.socials a {
  display: flex;
  align-items: center;
  justify-content: center;
  gap: 9px;
  height: 42px;
}
.socials svg {
  width: 14px;
  height: 14px;
}
.socials .facebook svg {
  width: 10px;
}
.socials .facebook { background: #47619d; }
.socials .twitter { background: #03a9f4; }
.socials .linkedin { background: #5082aa; }
.socials .dribbble { background: #ea4b8b; }

.taskbar {
  display: flex;
  flex: none;
  align-items: stretch;
  height: 30px;
  background: linear-gradient(90deg, #dfe2ec, #e0d9dd 20%, #e8d6d9 32%, #ded8dc 45%, #e0dadd);
}
.start {
  width: 36px;
}
.search {
  display: flex;
  align-items: center;
  gap: 12px;
  width: 258px;
  padding: 0 11px;
  border: 1px solid #c8c8cc;
  background: #fff;
}
.search input {
  flex: 1;
  padding: 0;
  font-size: 14px;
  background: none;
}
.search input::placeholder {
  color: #2b2b2b;
  opacity: 1;
}
.view {
  width: 38px;
}
.pinned {
  display: flex;
  flex: 0 1 688px;
}
.pinned button {
  flex: 1;
}
.pinned button:nth-child(-n + 7) {
  flex: 0 0 32px;
}
.running {
  background: linear-gradient(#0a78d4, #0a78d4) 50% 100% / 22px 2px no-repeat;
}
.active {
  background: linear-gradient(#f5f3f5 28px, #0a78d4 28px);
}
.alert {
  background: linear-gradient(#f7ae7e 28px, #f57a14 28px);
}
.status {
  display: flex;
  align-items: center;
  margin-left: auto;
  padding-right: 13px;
  font-size: 12px;
}
.weather {
  gap: 8px;
  margin-right: 14px;
  font-size: 13px;
}
.weather svg {
  width: 24px;
  height: 16px;
}
.tray {
  display: flex;
}
.tray span {
  display: grid;
  place-items: center;
  width: 24px;
}
time {
  width: 61px;
  text-align: center;
}
.notice {
  width: 40px;
  height: 30px;
  background: #e9e5e8;
}
</style>
